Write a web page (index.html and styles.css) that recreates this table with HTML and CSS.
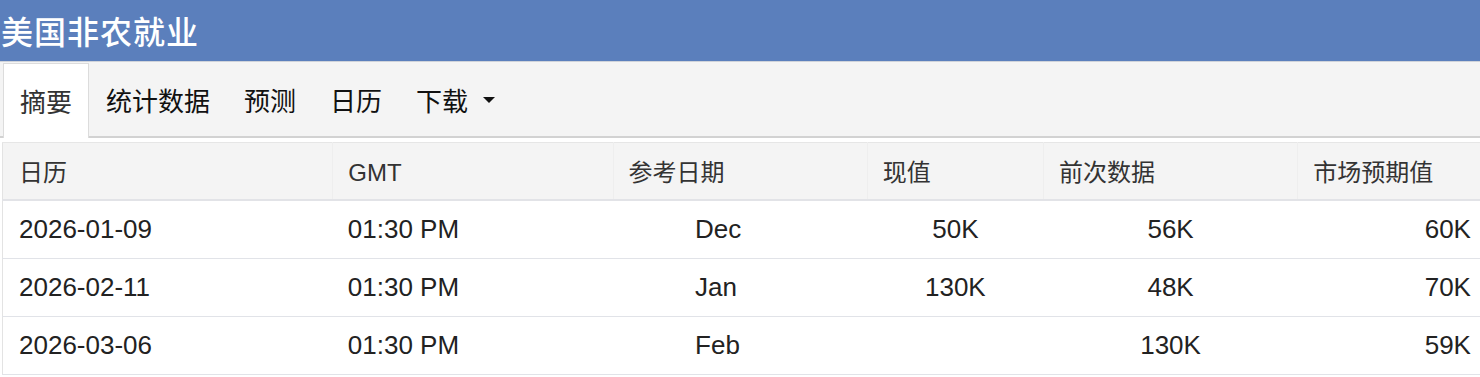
FILE: index.html
```html
<!DOCTYPE html>
<html lang="zh-CN">
<head>
<meta charset="utf-8">
<title>美国非农就业</title>
<link rel="stylesheet" href="styles.css">
</head>
<body>
<div class="page">
  <header class="title-bar">美国非农就业</header>
  <nav class="tabs">
    <ul class="tab-list">
      <li class="tab active">摘要</li>
      <li class="tab">统计数据</li>
      <li class="tab">预测</li>
      <li class="tab">日历</li>
      <li class="tab dropdown">下载<span class="caret"></span></li>
    </ul>
  </nav>
  <div class="table-wrap">
    <table class="grid">
      <colgroup>
        <col class="c1"><col class="c2"><col class="c3"><col class="c4"><col class="c5"><col class="c6">
      </colgroup>
      <thead>
        <tr>
          <th>日历</th>
          <th class="latin">GMT</th>
          <th>参考日期</th>
          <th>现值</th>
          <th>前次数据</th>
          <th>市场预期值</th>
        </tr>
      </thead>
      <tbody>
        <tr>
          <td>2026-01-09</td>
          <td>01:30 PM</td>
          <td class="ref">Dec</td>
          <td class="num">50K</td>
          <td class="num">56K</td>
          <td class="num">60K</td>
        </tr>
        <tr>
          <td>2026-02-11</td>
          <td>01:30 PM</td>
          <td class="ref">Jan</td>
          <td class="num">130K</td>
          <td class="num">48K</td>
          <td class="num">70K</td>
        </tr>
        <tr>
          <td>2026-03-06</td>
          <td>01:30 PM</td>
          <td class="ref">Feb</td>
          <td class="num"></td>
          <td class="num">130K</td>
          <td class="num">59K</td>
        </tr>
      </tbody>
    </table>
  </div>
</div>
</body>
</html>
```
FILE: styles.css
```css
html, body {
  margin: 0;
  padding: 0;
  background: #ffffff;
  overflow: hidden;
}

.page {
  width: 1480px;
  overflow: hidden;
  font-family: "Liberation Sans", "Noto Sans CJK SC", sans-serif;
  color: #222;
}

.title-bar {
  height: 62px;
  box-sizing: border-box;
  background: #5b7fbc;
  border-bottom: 1px solid #cfd3da;
  color: #ffffff;
  font-family: "Noto Sans CJK SC", sans-serif;
  font-size: 32px;
  font-weight: 500;
  line-height: 61px;
  padding-left: 1px;
  letter-spacing: 1px;
}

.tabs {
  background: #f4f4f4;
  border-bottom: 2px solid #d2d2d2;
  height: 74px;
  box-sizing: content-box;
}

.tab-list {
  list-style: none;
  margin: 0;
  padding: 1px 0 0 3px;
  display: flex;
  height: 73px;
}

.tab {
  display: flex;
  align-items: center;
  padding: 0 16px 2px 16px;
  border: 1px solid transparent;
  border-bottom: none;
  font-family: "Noto Sans CJK SC", sans-serif;
  font-size: 26px;
  color: #111;
  white-space: nowrap;
}

.tab.active {
  background: #ffffff;
  border-color: #dcdcdc;
  color: #333;
  margin-bottom: -2px;
  height: 75px;
  box-sizing: border-box;
}

.caret {
  display: inline-block;
  width: 0;
  height: 0;
  margin-left: 15px;
  margin-top: 2px;
  border-left: 6px solid transparent;
  border-right: 6px solid transparent;
  border-top: 6px solid #111;
}

.table-wrap {
  margin-top: 4px;
  padding-left: 2px;
}

.grid {
  table-layout: fixed;
  width: 1596px;
  border-collapse: collapse;
  border-left: 1px solid #e3e3e3;
  border-top: 1px solid #e6e6e6;
}

.c1 { width: 330px; }
.c2 { width: 280px; }
.c3 { width: 254px; }
.c4 { width: 176px; }
.c5 { width: 254px; }
.c6 { width: 300px; }

.grid th {
  background: #f4f4f4;
  height: 57px;
  padding: 0 0 1px 15px;
  text-align: left;
  font-family: "Liberation Sans", "Noto Sans CJK SC", sans-serif;
  font-weight: normal;
  font-size: 24px;
  color: #333;
  border-left: 1px solid #eeeeee;
  border-bottom: 2px solid #e2e3e7;
  box-sizing: border-box;
}

.grid th.latin {
  padding-top: 4px;
  padding-bottom: 0;
}

.grid th:first-child {
  border-left: none;
  padding-left: 16px;
}

.grid td {
  height: 57px;
  padding: 0 0 0 15px;
  font-size: 26px;
  color: #222;
  border-bottom: 1px solid #e1e3e8;
  white-space: nowrap;
}

.grid td:first-child {
  padding-left: 16px;
}

.grid td.ref {
  padding-left: 82px;
}

.grid td.num {
  text-align: center;
  padding-left: 0;
}
```
